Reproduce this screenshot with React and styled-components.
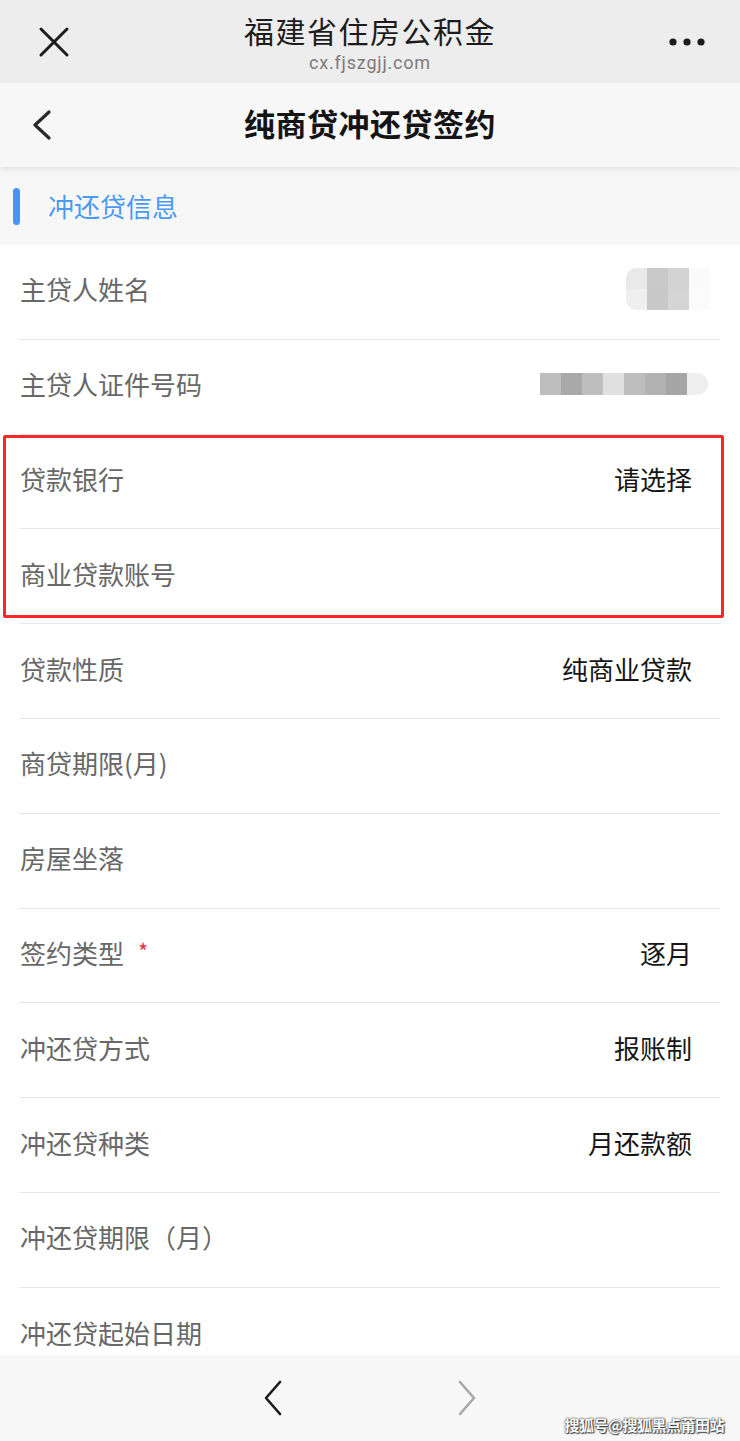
import React from 'react'
import styled, { createGlobalStyle } from 'styled-components'

const GlobalStyle = createGlobalStyle`
  html, body {
    margin: 0;
    padding: 0;
    background: #ffffff;
    font-family: "Noto Sans CJK SC", "Noto Sans", sans-serif;
  }
`

const Page = styled.div`
  width: 740px;
  height: 1441px;
  display: flex;
  flex-direction: column;
  overflow: hidden;
  background: #ffffff;
`

const TopBar = styled.div`
  flex: 0 0 83px;
  background: #ededed;
  display: grid;
  grid-template-columns: 106px 1fr 106px;
  align-items: center;
`

const TopTitle = styled.div`
  display: flex;
  flex-direction: column;
  align-items: center;
  gap: 8.5px;
  padding-top: 3.5px;
`

const SiteName = styled.div`
  font-size: 30px;
  line-height: 30px;
  color: #1c1c1c;
  letter-spacing: 1.5px;
`

const SiteUrl = styled.div`
  font-family: "Roboto", "Liberation Sans", sans-serif;
  font-size: 18px;
  line-height: 18px;
  color: #7b7b7b;
  letter-spacing: 0.8px;
`

const IconCell = styled.div`
  display: flex;
  align-items: center;
  justify-content: ${p => p.align || 'flex-start'};
  padding: ${p => p.pad || '0'};
`

const NavBar = styled.div`
  flex: 0 0 84px;
  background: #f7f7f7;
  display: grid;
  grid-template-columns: 106px 1fr 106px;
  align-items: center;
  box-shadow: 0 3px 6px rgba(0, 0, 0, 0.08);
  position: relative;
  z-index: 1;
`

const NavTitle = styled.div`
  text-align: center;
  font-size: 31px;
  font-weight: 700;
  color: #141414;
  letter-spacing: 0.5px;
  padding-bottom: 5px;
`

const Section = styled.div`
  flex: 0 0 78px;
  background: #f7f7f7;
  display: flex;
  align-items: center;
  padding-left: 13px;
  gap: 28px;
`

const SectionBar = styled.div`
  width: 7px;
  height: 37px;
  border-radius: 4px;
  background: #4596f4;
`

const SectionTitle = styled.div`
  font-size: 26px;
  color: #4a9af5;
  margin-top: -2px;
`

const List = styled.div`
  flex: 1;
  overflow: hidden;
  background: #ffffff;
`

const Framed = styled.div`
  position: relative;

  &::after {
    content: '';
    position: absolute;
    left: 3px;
    right: 16px;
    top: 0;
    bottom: 6px;
    border: 3px solid #fb2626;
    border-radius: 2px;
    pointer-events: none;
  }
`

const Row = styled.div`
  height: 94.8px;
  margin: 0 20px;
  padding-bottom: 6px;
  display: flex;
  align-items: center;
  justify-content: space-between;
  border-bottom: ${p => (p.last ? 'none' : '1.5px solid #e6e6e6')};
  box-sizing: border-box;
`

const Label = styled.div`
  font-size: 26px;
  color: #686868;
  display: flex;
  align-items: center;
  gap: 14px;
`

const Star = styled.span`
  color: #e8333c;
  font-size: 22px;
  margin-top: -4px;
`

const Value = styled.div`
  font-size: 26px;
  color: #161616;
  margin-right: 28px;
`

const Blur = styled.div`
  display: grid;
  grid-template-columns: repeat(${p => p.cols}, 21px);
  grid-auto-rows: ${p => p.rowH}px;
  margin-right: ${p => p.mr}px;
  border-radius: ${p => p.radius};
  overflow: hidden;
`

const Cell = styled.div`
  background: ${p => p.c};
`

const BottomBar = styled.div`
  flex: 0 0 86px;
  background: #f7f7f7;
  display: flex;
  justify-content: center;
  align-items: center;
  gap: 174px;
  position: relative;
`

const Watermark = styled.div`
  position: absolute;
  right: 16px;
  bottom: 6px;
  font-size: 15px;
  font-weight: 700;
  color: #ffffff;
  letter-spacing: -0.5px;
  text-shadow: 0 0 2px #333, 0 0 1px #333, 1px 1px 1px #444;
`

const CloseIcon = () => (
  <svg width="32" height="32" viewBox="0 0 32 32">
    <path d="M3 3 L29 29 M29 3 L3 29" stroke="#1c1c1c" strokeWidth="3" strokeLinecap="round" />
  </svg>
)

const MoreIcon = () => (
  <svg width="36" height="8" viewBox="0 0 36 8">
    <circle cx="4" cy="4" r="3.6" fill="#1c1c1c" />
    <circle cx="18" cy="4" r="3.6" fill="#1c1c1c" />
    <circle cx="32" cy="4" r="3.6" fill="#1c1c1c" />
  </svg>
)

const Chevron = ({ dir = 'left', color = '#222', w = 20, h = 34, sw = 3 }) => (
  <svg width={w} height={h} viewBox={`0 0 ${w} ${h}`}>
    <path
      d={dir === 'left' ? `M${w - 3} 2 L3 ${h / 2} L${w - 3} ${h - 2}` : `M3 2 L${w - 3} ${h / 2} L3 ${h - 2}`}
      stroke={color}
      strokeWidth={sw}
      fill="none"
      strokeLinecap="round"
      strokeLinejoin="round"
    />
  </svg>
)

const nameBlur = [
  '#e9e9e9', '#c9c9c9', '#d3d3d3', '#fafafa',
  '#efefef', '#c8c8c8', '#d5d5d5', '#fbfbfb',
]
const idBlur = ['#bdbdbd', '#a9a9a9', '#bebebe', '#e0e0e0', '#bdbdbd', '#b2b2b2', '#a6a6a6', '#efefef']

const rowsBefore = [
  { label: '主贷人姓名', blur: 'name' },
  { label: '主贷人证件号码', blur: 'id' },
]

const framedRows = [
  { label: '贷款银行', value: '请选择' },
  { label: '商业贷款账号' },
]

const rowsAfter = [
  { label: '贷款性质', value: '纯商业贷款' },
  { label: '商贷期限(月)' },
  { label: '房屋坐落' },
  { label: '签约类型', value: '逐月', required: true },
  { label: '冲还贷方式', value: '报账制' },
  { label: '冲还贷种类', value: '月还款额' },
  { label: '冲还贷期限（月）' },
  { label: '冲还贷起始日期', last: true },
]

function BlurBox({ kind }) {
  if (kind === 'name') {
    return (
      <Blur cols={4} rowH={21} mr={10} radius="10px 0 0 10px">
        {nameBlur.map((c, i) => <Cell key={i} c={c} />)}
      </Blur>
    )
  }
  return (
    <Blur cols={8} rowH={22} mr={12} radius="0 10px 10px 0">
      {idBlur.map((c, i) => <Cell key={i} c={c} />)}
    </Blur>
  )
}

function FormRow({ row }) {
  return (
    <Row last={row.last}>
      <Label>
        {row.label}
        {row.required && <Star>*</Star>}
      </Label>
      {row.value && <Value>{row.value}</Value>}
      {row.blur && <BlurBox kind={row.blur} />}
    </Row>
  )
}

export default function App() {
  return (
    <Page>
      <GlobalStyle />
      <TopBar>
        <IconCell pad="0 0 0 38px">
          <CloseIcon />
        </IconCell>
        <TopTitle>
          <SiteName>福建省住房公积金</SiteName>
          <SiteUrl>cx.fjszgjj.com</SiteUrl>
        </TopTitle>
        <IconCell align="flex-end" pad="0 35px 0 0">
          <MoreIcon />
        </IconCell>
      </TopBar>
      <NavBar>
        <IconCell pad="0 0 0 32px">
          <Chevron w={20} h={30} sw={3.2} color="#2a2a2a" />
        </IconCell>
        <NavTitle>纯商贷冲还贷签约</NavTitle>
        <div />
      </NavBar>
      <Section>
        <SectionBar />
        <SectionTitle>冲还贷信息</SectionTitle>
      </Section>
      <List>
        {rowsBefore.map(r => <FormRow key={r.label} row={r} />)}
        <Framed>
          {framedRows.map(r => <FormRow key={r.label} row={r} />)}
        </Framed>
        {rowsAfter.map(r => <FormRow key={r.label} row={r} />)}
      </List>
      <BottomBar>
        <Chevron w={20} h={36} sw={2.6} color="#1a1a1a" />
        <Chevron dir="right" w={20} h={36} sw={2.6} color="#a8a8a8" />
        <Watermark>搜狐号@搜狐黑点莆田站</Watermark>
      </BottomBar>
    </Page>
  )
}
